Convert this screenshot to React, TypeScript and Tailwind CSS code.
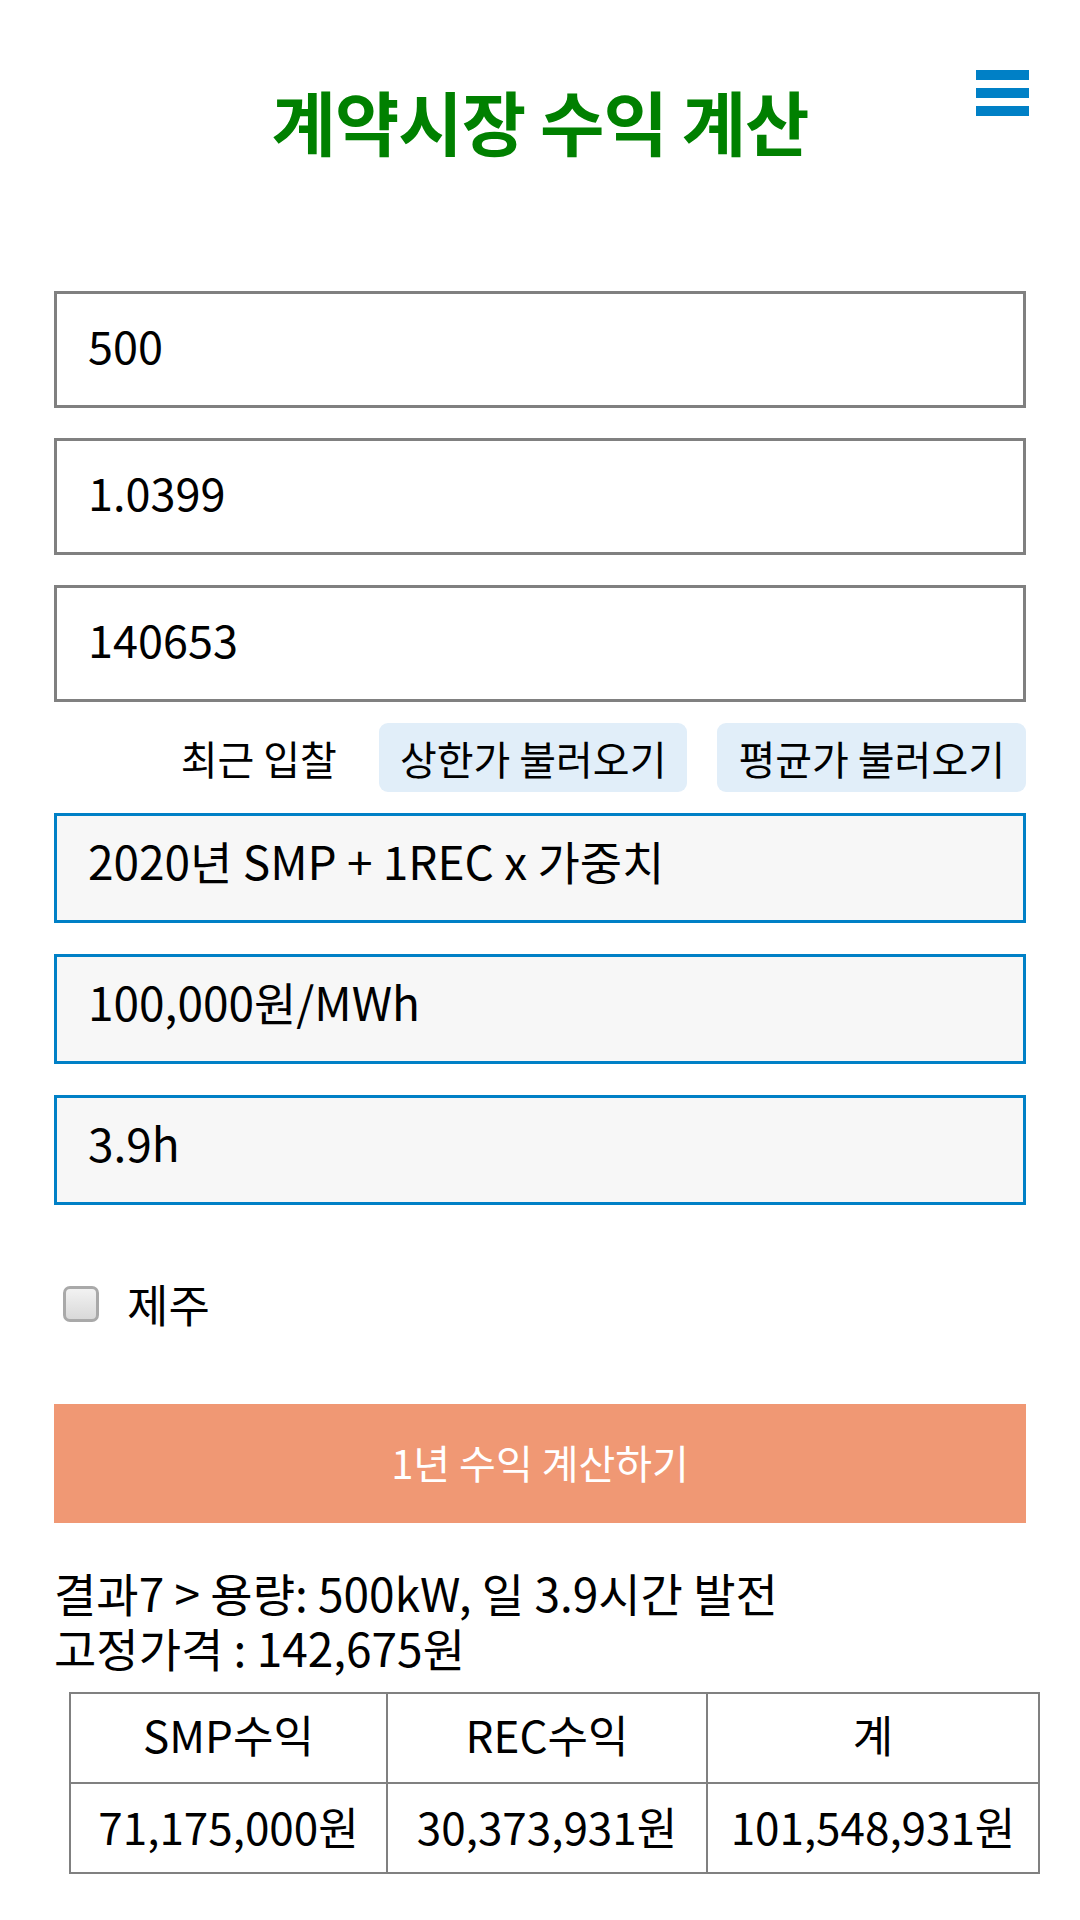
import { useState } from 'react';

const App = () => {
  const [jeju, setJeju] = useState(false);

  const plainInputs = ['500', '1.0399', '140653'];
  const readonlyInputs = ['2020년 SMP + 1REC x 가중치', '100,000원/MWh', '3.9h'];

  return (
    <div className="min-h-screen bg-white font-['Noto_Sans_CJK_KR','Noto_Sans',sans-serif] text-black">
      <header className="relative pt-[78px]">
        <h1 className="text-center text-[70px] font-bold leading-[86px] tracking-[-1px] text-[#008000]">
          계약시장 수익 계산
        </h1>
        <button className="absolute right-[51px] top-[70px] flex w-[53px] flex-col gap-[8px]" aria-label="메뉴">
          <span className="block h-[10px] w-full bg-[#0080c6]" />
          <span className="block h-[10px] w-full bg-[#0080c6]" />
          <span className="block h-[10px] w-full bg-[#0080c6]" />
        </button>
      </header>

      <main className="px-[54px] pt-[127px]">
        <div className="flex flex-col gap-[30px]">
          {plainInputs.map((v) => (
            <div
              key={v}
              className="flex h-[117px] items-center border-[3px] border-[#808080] pb-[10px] pl-[31px] text-[45px]"
            >
              {v}
            </div>
          ))}
        </div>

        <div className="mt-[21px] flex h-[69px] items-center justify-end">
          <span className="mr-[42px] text-[40px]">최근 입찰</span>
          <button className="h-[69px] rounded-[9px] bg-[#e1eef9] px-[21px] text-[40px]">상한가 불러오기</button>
          <button className="ml-[30px] h-[69px] rounded-[9px] bg-[#e1eef9] px-[21px] text-[40px]">평균가 불러오기</button>
        </div>

        <div className="mt-[21px] flex flex-col gap-[31px]">
          {readonlyInputs.map((v) => (
            <div
              key={v}
              className="flex h-[110px] items-center border-[3px] border-[#0080c6] bg-[#f7f7f7] pb-[16px] pl-[31px] text-[46px]"
            >
              {v}
            </div>
          ))}
        </div>

        <div className="mt-[69px] flex h-[60px] items-center gap-[28px] pl-[9px]">
          <input
            id="jeju"
            type="checkbox"
            checked={jeju}
            onChange={(e) => setJeju(e.target.checked)}
            className="h-[36px] w-[36px] appearance-none rounded-[7px] border-[3px] border-[#a9a9a9] bg-gradient-to-b from-[#f2f2f2] to-[#d9d9d9]"
          />
          <label htmlFor="jeju" className="text-[45px] leading-[60px]">
            제주
          </label>
        </div>

        <button className="mt-[70px] flex h-[119px] w-full items-center justify-center bg-[#f09874] pb-[4px] text-[40px] text-white">
          1년 수익 계산하기
        </button>

        <div className="mt-[42px] text-[46px] leading-[55px]">
          <p>결과7 &gt; 용량: 500kW, 일 3.9시간 발전</p>
          <p>고정가격 : 142,675원</p>
        </div>

        <table className="mt-[17px] ml-[15px] w-[971px] border-collapse border-2 border-[#808080] text-center text-[44px]">
          <thead>
            <tr className="h-[90px]">
              <th className="w-[317px] border-2 border-[#808080] pb-[8px] font-normal">SMP수익</th>
              <th className="w-[320px] border-2 border-[#808080] pb-[8px] font-normal">REC수익</th>
              <th className="border-2 border-[#808080] pb-[8px] font-normal">계</th>
            </tr>
          </thead>
          <tbody>
            <tr className="h-[90px]">
              <td className="border-2 border-[#808080] pb-[4px]">71,175,000원</td>
              <td className="border-2 border-[#808080] pb-[4px]">30,373,931원</td>
              <td className="border-2 border-[#808080] pb-[4px]">101,548,931원</td>
            </tr>
          </tbody>
        </table>
      </main>
    </div>
  );
};

export default App;
